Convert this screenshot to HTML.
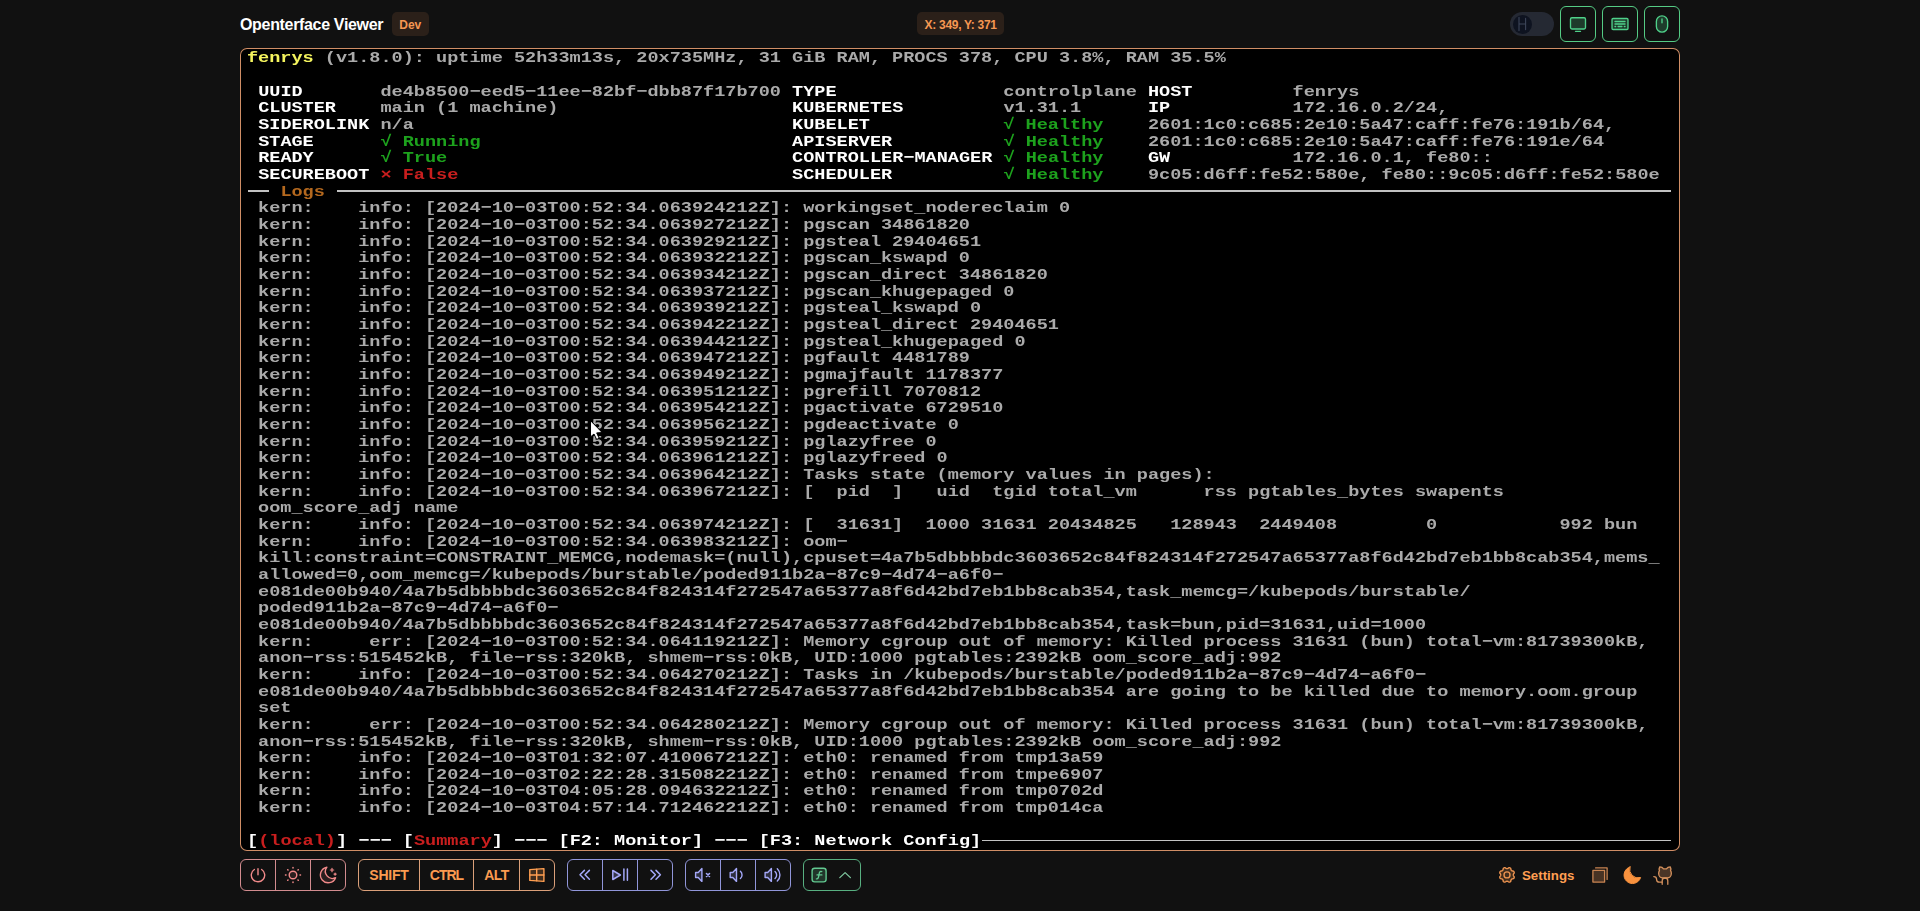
<!DOCTYPE html>
<html>
<head>
<meta charset="utf-8">
<title>Openterface Viewer</title>
<style>
html,body{margin:0;padding:0;}
body{width:1920px;height:911px;background:#111111;overflow:hidden;position:relative;font-family:"Liberation Sans",sans-serif;}
.abs{position:absolute;}
#title{left:240px;top:16.3px;font-size:16px;font-weight:bold;color:#fff;line-height:18px;white-space:nowrap;letter-spacing:-0.33px;}
.badge{background:#2b2019;border-radius:5px;color:#f59752;font-weight:bold;font-size:12px;text-align:center;white-space:nowrap;}
#dev{left:392px;top:12.4px;width:36.6px;height:23.2px;line-height:27.2px;}
#xy{left:917px;top:12.2px;width:87.3px;height:23.2px;line-height:27.2px;letter-spacing:-0.3px;}
#sw{left:1510px;top:12px;width:44px;height:24px;border-radius:12px;background:#252933;}
#sw .knob{position:absolute;left:3px;top:2.5px;width:19px;height:19px;border-radius:10px;background:#0e1320;}
.gb{width:36px;height:36px;box-sizing:border-box;border:1px solid #55cc85;border-radius:6px;top:6px;}
.gb svg{position:absolute;left:9px;top:9px;}
#frame{left:240px;top:48px;width:1440px;height:803px;background:#000;border-radius:7px;box-shadow:inset 0 0 0 1px #d08e66;overflow:hidden;}
#term{position:absolute;left:0;top:0;width:1440px;height:803px;font-family:"Liberation Mono",monospace;font-weight:bold;font-size:15.3px;color:#aaaaaa;filter:blur(0.35px);}
.r{position:absolute;left:6.90px;height:16.66px;line-height:16.66px;white-space:pre;transform-origin:0 0;transform:scaleX(1.21168);}
.hl{position:absolute;height:1.5px;background:#c2c2c2;}
.grp{top:859px;height:32px;box-sizing:border-box;border:1px solid;border-radius:6px;display:flex;}
.grp > div{box-sizing:border-box;height:30px;position:relative;border-left:1px solid;display:flex;align-items:center;justify-content:center;}
.grp > div:first-child{border-left:none;}
.grp svg{display:block;}
.red{border-color:#d28c8f;color:#f28b8b;} .red > div{border-color:#d28c8f;}
.org{border-color:#dba07a;color:#fb9b50;} .org > div{border-color:#dba07a;}
.ind{border-color:#9196da;color:#9a9df5;} .ind > div{border-color:#9196da;}
.grn{border-color:#58b081;color:#42c77c;} .grn > div{border-color:#58b081;}
.kt{font-weight:bold;font-size:14px;letter-spacing:-0.2px;}
</style>
</head>
<body>
<div id="title" class="abs">Openterface Viewer</div>
<div id="dev" class="abs badge">Dev</div>
<div id="xy" class="abs badge">X: 349, Y: 371</div>

<div id="sw" class="abs"><div class="knob"></div></div>
<div class="abs gb" style="left:1560px"></div>
<div class="abs gb" style="left:1602px"></div>
<div class="abs gb" style="left:1644px"></div>

<div id="frame" class="abs">
<div id="term">
<div class="r" style="top:2.45px"><span style="color:#f4f45e">fenrys</span> (v1.8.0): uptime 52h33m13s, 20x735MHz, 31 GiB RAM, PROCS 378, CPU 3.8%, RAM 35.5%</div>
<div class="r" style="top:35.77px"> <span style="color:#ffffff">UUID</span>       de4b8500−eed5−11ee−82bf−dbb87f17b700 <span style="color:#ffffff">TYPE</span>               controlplane <span style="color:#ffffff">HOST</span>         fenrys</div>
<div class="r" style="top:52.43px"> <span style="color:#ffffff">CLUSTER</span>    main (1 machine)                     <span style="color:#ffffff">KUBERNETES</span>         v1.31.1      <span style="color:#ffffff">IP</span>           172.16.0.2/24,</div>
<div class="r" style="top:69.09px"> <span style="color:#ffffff">SIDEROLINK</span> n/a                                  <span style="color:#ffffff">KUBELET</span>            <span style="color:#1da21d">√ Healthy</span>    2601:1c0:c685:2e10:5a47:caff:fe76:191b/64,</div>
<div class="r" style="top:85.75px"> <span style="color:#ffffff">STAGE</span>      <span style="color:#1da21d">√ Running</span>                            <span style="color:#ffffff">APISERVER</span>          <span style="color:#1da21d">√ Healthy</span>    2601:1c0:c685:2e10:5a47:caff:fe76:191e/64</div>
<div class="r" style="top:102.41px"> <span style="color:#ffffff">READY</span>      <span style="color:#1da21d">√ True</span>                               <span style="color:#ffffff">CONTROLLER−MANAGER</span> <span style="color:#1da21d">√ Healthy</span>    <span style="color:#ffffff">GW</span>           172.16.0.1, fe80::</div>
<div class="r" style="top:119.07px"> <span style="color:#ffffff">SECUREBOOT</span> <span style="color:#c81e1e">× False</span>                              <span style="color:#ffffff">SCHEDULER</span>          <span style="color:#1da21d">√ Healthy</span>    9c05:d6ff:fe52:580e, fe80::9c05:d6ff:fe52:580e</div>
<div class="r" style="top:135.73px">   <span style="color:#b4681e">Logs</span></div>
<div class="r" style="top:152.39px"> kern:    info: [2024−10−03T00:52:34.063924212Z]: workingset_nodereclaim 0</div>
<div class="r" style="top:169.05px"> kern:    info: [2024−10−03T00:52:34.063927212Z]: pgscan 34861820</div>
<div class="r" style="top:185.71px"> kern:    info: [2024−10−03T00:52:34.063929212Z]: pgsteal 29404651</div>
<div class="r" style="top:202.37px"> kern:    info: [2024−10−03T00:52:34.063932212Z]: pgscan_kswapd 0</div>
<div class="r" style="top:219.03px"> kern:    info: [2024−10−03T00:52:34.063934212Z]: pgscan_direct 34861820</div>
<div class="r" style="top:235.69px"> kern:    info: [2024−10−03T00:52:34.063937212Z]: pgscan_khugepaged 0</div>
<div class="r" style="top:252.35px"> kern:    info: [2024−10−03T00:52:34.063939212Z]: pgsteal_kswapd 0</div>
<div class="r" style="top:269.01px"> kern:    info: [2024−10−03T00:52:34.063942212Z]: pgsteal_direct 29404651</div>
<div class="r" style="top:285.67px"> kern:    info: [2024−10−03T00:52:34.063944212Z]: pgsteal_khugepaged 0</div>
<div class="r" style="top:302.33px"> kern:    info: [2024−10−03T00:52:34.063947212Z]: pgfault 4481789</div>
<div class="r" style="top:318.99px"> kern:    info: [2024−10−03T00:52:34.063949212Z]: pgmajfault 1178377</div>
<div class="r" style="top:335.65px"> kern:    info: [2024−10−03T00:52:34.063951212Z]: pgrefill 7070812</div>
<div class="r" style="top:352.31px"> kern:    info: [2024−10−03T00:52:34.063954212Z]: pgactivate 6729510</div>
<div class="r" style="top:368.97px"> kern:    info: [2024−10−03T00:52:34.063956212Z]: pgdeactivate 0</div>
<div class="r" style="top:385.63px"> kern:    info: [2024−10−03T00:52:34.063959212Z]: pglazyfree 0</div>
<div class="r" style="top:402.29px"> kern:    info: [2024−10−03T00:52:34.063961212Z]: pglazyfreed 0</div>
<div class="r" style="top:418.95px"> kern:    info: [2024−10−03T00:52:34.063964212Z]: Tasks state (memory values in pages):</div>
<div class="r" style="top:435.61px"> kern:    info: [2024−10−03T00:52:34.063967212Z]: [  pid  ]   uid  tgid total_vm      rss pgtables_bytes swapents</div>
<div class="r" style="top:452.27px"> oom_score_adj name</div>
<div class="r" style="top:468.93px"> kern:    info: [2024−10−03T00:52:34.063974212Z]: [  31631]  1000 31631 20434825   128943  2449408        0           992 bun</div>
<div class="r" style="top:485.59px"> kern:    info: [2024−10−03T00:52:34.063983212Z]: oom−</div>
<div class="r" style="top:502.25px"> kill:constraint=CONSTRAINT_MEMCG,nodemask=(null),cpuset=4a7b5dbbbbdc3603652c84f824314f272547a65377a8f6d42bd7eb1bb8cab354,mems_</div>
<div class="r" style="top:518.91px"> allowed=0,oom_memcg=/kubepods/burstable/poded911b2a−87c9−4d74−a6f0−</div>
<div class="r" style="top:535.57px"> e081de00b940/4a7b5dbbbbdc3603652c84f824314f272547a65377a8f6d42bd7eb1bb8cab354,task_memcg=/kubepods/burstable/</div>
<div class="r" style="top:552.23px"> poded911b2a−87c9−4d74−a6f0−</div>
<div class="r" style="top:568.89px"> e081de00b940/4a7b5dbbbbdc3603652c84f824314f272547a65377a8f6d42bd7eb1bb8cab354,task=bun,pid=31631,uid=1000</div>
<div class="r" style="top:585.55px"> kern:     err: [2024−10−03T00:52:34.064119212Z]: Memory cgroup out of memory: Killed process 31631 (bun) total−vm:81739300kB,</div>
<div class="r" style="top:602.21px"> anon−rss:515452kB, file−rss:320kB, shmem−rss:0kB, UID:1000 pgtables:2392kB oom_score_adj:992</div>
<div class="r" style="top:618.87px"> kern:    info: [2024−10−03T00:52:34.064270212Z]: Tasks in /kubepods/burstable/poded911b2a−87c9−4d74−a6f0−</div>
<div class="r" style="top:635.53px"> e081de00b940/4a7b5dbbbbdc3603652c84f824314f272547a65377a8f6d42bd7eb1bb8cab354 are going to be killed due to memory.oom.group</div>
<div class="r" style="top:652.19px"> set</div>
<div class="r" style="top:668.85px"> kern:     err: [2024−10−03T00:52:34.064280212Z]: Memory cgroup out of memory: Killed process 31631 (bun) total−vm:81739300kB,</div>
<div class="r" style="top:685.51px"> anon−rss:515452kB, file−rss:320kB, shmem−rss:0kB, UID:1000 pgtables:2392kB oom_score_adj:992</div>
<div class="r" style="top:702.17px"> kern:    info: [2024−10−03T01:32:07.410067212Z]: eth0: renamed from tmp13a59</div>
<div class="r" style="top:718.83px"> kern:    info: [2024−10−03T02:22:28.315082212Z]: eth0: renamed from tmpe6907</div>
<div class="r" style="top:735.49px"> kern:    info: [2024−10−03T04:05:28.094632212Z]: eth0: renamed from tmp0702d</div>
<div class="r" style="top:752.15px"> kern:    info: [2024−10−03T04:57:14.712462212Z]: eth0: renamed from tmp014ca</div>
<div class="r" style="top:785.47px"><span style="color:#ffffff">[</span><span style="color:#c81e1e">(local)</span><span style="color:#ffffff">]</span><span style="color:#ffffff"> −−− </span><span style="color:#ffffff">[</span><span style="color:#c81e1e">Summary</span><span style="color:#ffffff">]</span><span style="color:#ffffff"> −−− [F2: Monitor] −−− [F3: Network Config]</span></div>
<div class="hl" style="top:142.41px;left:7.70px;width:21.45px"></div><div class="hl" style="top:142.41px;left:96.70px;width:1334.20px"></div><div class="hl" style="top:791.70px;left:741.95px;width:688.95px"></div>
</div>
</div>

<div class="abs grp red" style="left:240px;width:106px"><div style="width:34px"></div><div style="width:35px"></div><div style="width:35px"></div></div>
<div class="abs grp org" style="left:358px;width:197px"><div style="width:60px" class="kt">SHIFT</div><div style="width:54px;letter-spacing:-1px" class="kt">CTRL</div><div style="width:46px;letter-spacing:-0.6px" class="kt">ALT</div><div style="width:35px"></div></div>
<div class="abs grp ind" style="left:567px;width:106px"><div style="width:34px"></div><div style="width:35px"></div><div style="width:35px"></div></div>
<div class="abs grp ind" style="left:685px;width:106px"><div style="width:34px"></div><div style="width:35px"></div><div style="width:35px"></div></div>
<div class="abs grp grn" style="left:803px;width:58px"><div style="width:56px;border:none"></div></div>

<div class="abs" style="left:1522px;top:866.5px;font-size:13.3px;font-weight:bold;color:#ff9f52;line-height:18px">Settings</div>
<svg class="abs" style="left:0;top:0" width="1920" height="911" viewBox="0 0 1920 911" fill="none" stroke-linecap="round" stroke-linejoin="round">
<g stroke="#3d4659" stroke-width="1.1"><path d="M1519 17.4V30.6M1525.6 18.4V29.6M1519 24H1525.6"/></g>
<g stroke="#4fd18a" stroke-width="1.35">
<rect x="1570.50" y="17.75" width="15.00" height="11.25" rx="1.4" fill="#4fd18a" fill-opacity=".22"/>
<path d="M1575.50 31.34H1580.50"/>
<rect x="1612.03" y="18.53" width="15.94" height="10.94" rx="1" fill="#4fd18a" fill-opacity=".22"/>
<path d="M1615.00 21.50H1625.00M1615.00 24.00H1625.00M1615.00 26.50H1615.62M1618.12 26.50H1621.88M1624.38 26.50H1625.00"/>
<rect x="1656.38" y="15.88" width="11.25" height="16.25" rx="5.62" fill="#4fd18a" fill-opacity=".22"/>
<path d="M1662.00 19.00V22.75"/>
</g>
<g stroke="#f18a8a" stroke-width="1.4">
<path d="M261.65 869.48A6.7 6.7 0 1 1 254.35 869.48M258 868.7V874.8"/>
<circle cx="293" cy="875" r="3.8" fill="#f18a8a" fill-opacity=".12"/>
<path stroke-width="1.5" d="M300.00 875.00L300.50 875.00M297.95 879.95L298.30 880.30M293.00 882.00L293.00 882.50M288.05 879.95L287.70 880.30M286.00 875.00L285.50 875.00M288.05 870.05L287.70 869.70M293.00 868.00L293.00 867.50M297.95 870.05L298.30 869.70"/>
<path d="M326.9 867.2A7 7 0 0 0 335.6 877.7A7.85 7.85 0 1 1 326.9 867.2Z" fill="#f18a8a" fill-opacity=".12"/>
<path stroke-width="1.2" d="M332 868.3V871.7M330.3 870H333.7M335.1 873V875.2M334 874.1H336.2"/>
</g>
<g stroke="#ff9f52" stroke-width="1.4">
<path d="M529.8 869.6L543.9 868.6V881.4L529.8 880.4Z" fill="#ff9f52" fill-opacity=".2"/>
<path d="M536.7 869.2V880.8M529.8 875H543.9"/>
</g>
<g stroke="#a4a8f8" stroke-width="1.5">
<path d="M584.4 870.4L580 874.8L584.4 879.2M589.4 870.4L585 874.8L589.4 879.2"/>
<path d="M612.8 870.5V879.5L620.4 875Z" fill="#a4a8f8" fill-opacity=".25"/>
<path d="M623.9 869V880.2M627.4 869V880.2"/>
<path d="M651 870.4L655.4 874.8L651 879.2M656 870.4L660.4 874.8L656 879.2"/>
</g>
<g stroke="#a4a8f8" stroke-width="1.4">
<path d="M695.60 872.5H698.20L701.90 868.6V881.4L698.20 877.5H695.60Z" fill="#a4a8f8" fill-opacity=".2"/>
<path stroke-width="1.6" d="M706.5 873.5L709.5 876.5M709.5 873.5L706.5 876.5"/>
<path d="M730.20 872.5H732.80L736.50 868.6V881.4L732.80 877.5H730.20Z" fill="#a4a8f8" fill-opacity=".2"/>
<path d="M740.4 871.3A4.8 4.8 0 0 1 740.4 878.5"/>
<path d="M765.10 872.5H767.70L771.40 868.6V881.4L767.70 877.5H765.10Z" fill="#a4a8f8" fill-opacity=".2"/>
<path d="M775 871.4A4.8 4.8 0 0 1 775 878.6M777.3 868.7A8.6 8.6 0 0 1 777.3 881.1"/>
</g>
<g stroke="#62c890" stroke-width="1.4">
<rect x="812.1" y="868.3" width="14" height="13.6" rx="2.6" fill="#62c890" fill-opacity=".2"/>
<path stroke-width="1.3" d="M821.8 871.6C819.6 870.9 819.3 872.6 819 874.6C818.6 877 818.3 879.3 816.4 878.9M817 874.9H821.9"/>
<path stroke-width="1.3" stroke="#7fc79f" d="M839.8 877.6L845.1 872.6L850.4 877.6"/>
</g>
<g stroke="#ee9450" stroke-width="1.35">
<path d="M1514.11,877.85 L1513.93,878.18 L1513.67,878.47 L1513.34,878.70 L1512.82,878.79 L1512.31,878.84 L1511.97,878.98 L1511.69,879.15 L1511.45,879.35 L1511.25,879.59 L1511.08,879.87 L1510.94,880.21 L1510.89,880.72 L1510.80,881.24 L1510.57,881.57 L1510.28,881.83 L1509.95,882.01 L1509.58,882.12 L1509.20,882.14 L1508.80,882.07 L1508.37,881.77 L1507.97,881.44 L1507.63,881.30 L1507.31,881.22 L1507.00,881.20 L1506.69,881.22 L1506.37,881.30 L1506.03,881.44 L1505.63,881.77 L1505.20,882.07 L1504.80,882.14 L1504.42,882.12 L1504.05,882.01 L1503.72,881.83 L1503.43,881.57 L1503.20,881.24 L1503.11,880.72 L1503.06,880.21 L1502.92,879.87 L1502.75,879.59 L1502.55,879.35 L1502.31,879.15 L1502.03,878.98 L1501.69,878.84 L1501.18,878.79 L1500.66,878.70 L1500.33,878.47 L1500.07,878.18 L1499.89,877.85 L1499.78,877.48 L1499.76,877.10 L1499.83,876.70 L1500.13,876.27 L1500.46,875.87 L1500.60,875.53 L1500.68,875.21 L1500.70,874.90 L1500.68,874.59 L1500.60,874.27 L1500.46,873.93 L1500.13,873.53 L1499.83,873.10 L1499.76,872.70 L1499.78,872.32 L1499.89,871.95 L1500.07,871.62 L1500.33,871.33 L1500.66,871.10 L1501.18,871.01 L1501.69,870.96 L1502.03,870.82 L1502.31,870.65 L1502.55,870.45 L1502.75,870.21 L1502.92,869.93 L1503.06,869.59 L1503.11,869.08 L1503.20,868.56 L1503.43,868.23 L1503.72,867.97 L1504.05,867.79 L1504.42,867.68 L1504.80,867.66 L1505.20,867.73 L1505.63,868.03 L1506.03,868.36 L1506.37,868.50 L1506.69,868.58 L1507.00,868.60 L1507.31,868.58 L1507.63,868.50 L1507.97,868.36 L1508.37,868.03 L1508.80,867.73 L1509.20,867.66 L1509.58,867.68 L1509.95,867.79 L1510.28,867.97 L1510.57,868.23 L1510.80,868.56 L1510.89,869.08 L1510.94,869.59 L1511.08,869.93 L1511.25,870.21 L1511.45,870.45 L1511.69,870.65 L1511.97,870.82 L1512.31,870.96 L1512.82,871.01 L1513.34,871.10 L1513.67,871.33 L1513.93,871.62 L1514.11,871.95 L1514.22,872.32 L1514.24,872.70 L1514.17,873.10 L1513.87,873.53 L1513.54,873.93 L1513.40,874.27 L1513.32,874.59 L1513.30,874.90 L1513.32,875.21 L1513.40,875.53 L1513.54,875.87 L1513.87,876.27 L1514.17,876.70 L1514.24,877.10 L1514.22,877.48Z" fill="#ff9f52" fill-opacity=".2"/>
<circle cx="1507" cy="874.9" r="3"/>
</g>
<g stroke="#c98452" stroke-width="1.3">
<rect x="1592.9" y="870.4" width="11.7" height="11.7" fill="#c98452" fill-opacity=".3"/>
<path d="M1595.6 867.9H1607.1V879.4"/>
</g>
<path d="M1630 866.9A8.5 8.5 0 0 0 1640.6 877.5A8.5 8.5 0 1 1 1630 866.9Z" fill="#f8923e" stroke="#f8923e" stroke-width="1"/>
<g transform="translate(1653.1 864) scale(0.0875)" stroke="#d3905c" stroke-width="15">
<path fill="#d3905c" fill-opacity=".3" d="M119.83,56A52,52,0,0,0,76,32a51.92,51.92,0,0,0-3.49,44.7A49.28,49.28,0,0,0,64,104v8a48,48,0,0,0,48,48h48a48,48,0,0,0,48-48v-8a49.28,49.28,0,0,0-8.51-27.3A51.92,51.92,0,0,0,196,32a52,52,0,0,0-43.83,24Z"/>
<path d="M104,232V192a32,32,0,0,1,32-32h0a32,32,0,0,1,32,32v40"/>
<path d="M104,208H72a32,32,0,0,1-32-32A32,32,0,0,0,8,144"/>
</g>
<path d="M590.5 421V436.9L594 434L596.6 439.4L599.2 438.3L596.7 432.9L601.9 432.6Z" fill="#fff" stroke="#000" stroke-width="1" stroke-linejoin="miter"/>
</svg>
</body>
</html>
